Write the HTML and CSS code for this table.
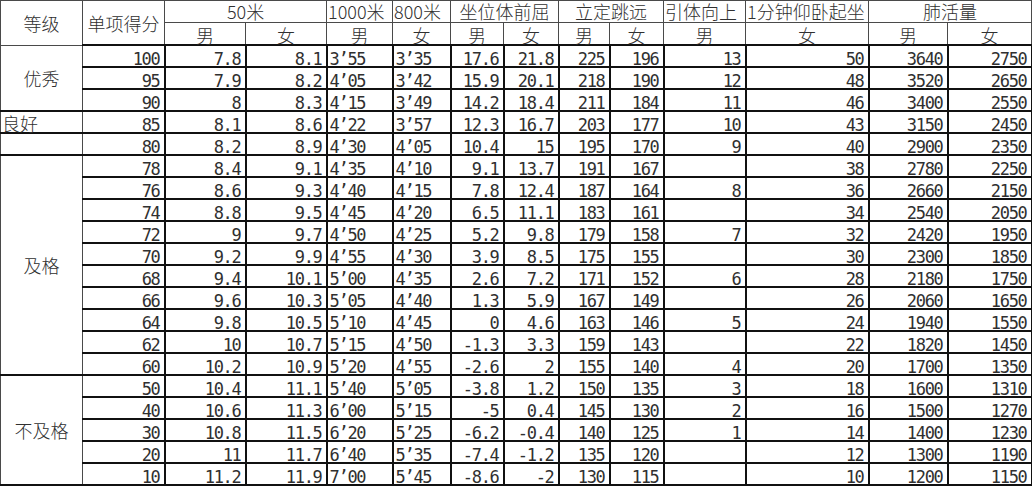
FILE: index.html
```html
<!DOCTYPE html>
<html lang="zh">
<head>
<meta charset="utf-8">
<title>体质测试评分标准</title>
<link rel="stylesheet" href="styles.css">
</head>
<body>
<table class="sheet">
  <colgroup>
    <col class="c82"><col class="c82"><col class="c81"><col class="c81"><col class="c66"><col class="c58"><col class="c53"><col class="c55"><col class="c51"><col class="c54"><col class="c82"><col class="c123"><col class="c79"><col class="c84">
  </colgroup>
  <thead>
    <tr class="h1">
      <th rowspan="2" class="grade-h">等级</th>
      <th rowspan="2" class="score-h">单项得分</th>
      <th colspan="2">50米</th>
      <th class="lefth">1000米</th>
      <th class="lefth">800米</th>
      <th colspan="2">坐位体前屈</th>
      <th colspan="2">立定跳远</th>
      <th class="lefth">引体向上</th>
      <th class="lefth">1分钟仰卧起坐</th>
      <th colspan="2">肺活量</th>
    </tr>
    <tr class="h2">
      <th>男</th><th>女</th><th>男</th><th>女</th><th>男</th><th>女</th><th>男</th><th>女</th><th>男</th><th>女</th><th>男</th><th>女</th>
    </tr>
  </thead>
  <tbody>
    <tr><td rowspan="3" class="grade">优秀</td><td class="score">100</td><td>7.8</td><td>8.1</td><td class="t">3’55</td><td class="t">3’35</td><td>17.6</td><td>21.8</td><td>225</td><td>196</td><td>13</td><td>50</td><td>3640</td><td>2750</td></tr>
    <tr><td class="score">95</td><td>7.9</td><td>8.2</td><td class="t">4’05</td><td class="t">3’42</td><td>15.9</td><td>20.1</td><td>218</td><td>190</td><td>12</td><td>48</td><td>3520</td><td>2650</td></tr>
    <tr><td class="score">90</td><td>8</td><td>8.3</td><td class="t">4’15</td><td class="t">3’49</td><td>14.2</td><td>18.4</td><td>211</td><td>184</td><td>11</td><td>46</td><td>3400</td><td>2550</td></tr>
    <tr><td class="grade g-liang">良好</td><td class="score">85</td><td>8.1</td><td>8.6</td><td class="t">4’22</td><td class="t">3’57</td><td>12.3</td><td>16.7</td><td>203</td><td>177</td><td>10</td><td>43</td><td>3150</td><td>2450</td></tr>
    <tr><td class="grade"></td><td class="score">80</td><td>8.2</td><td>8.9</td><td class="t">4’30</td><td class="t">4’05</td><td>10.4</td><td>15</td><td>195</td><td>170</td><td>9</td><td>40</td><td>2900</td><td>2350</td></tr>
    <tr><td rowspan="10" class="grade">及格</td><td class="score">78</td><td>8.4</td><td>9.1</td><td class="t">4’35</td><td class="t">4’10</td><td>9.1</td><td>13.7</td><td>191</td><td>167</td><td></td><td>38</td><td>2780</td><td>2250</td></tr>
    <tr><td class="score">76</td><td>8.6</td><td>9.3</td><td class="t">4’40</td><td class="t">4’15</td><td>7.8</td><td>12.4</td><td>187</td><td>164</td><td>8</td><td>36</td><td>2660</td><td>2150</td></tr>
    <tr><td class="score">74</td><td>8.8</td><td>9.5</td><td class="t">4’45</td><td class="t">4’20</td><td>6.5</td><td>11.1</td><td>183</td><td>161</td><td></td><td>34</td><td>2540</td><td>2050</td></tr>
    <tr><td class="score">72</td><td>9</td><td>9.7</td><td class="t">4’50</td><td class="t">4’25</td><td>5.2</td><td>9.8</td><td>179</td><td>158</td><td>7</td><td>32</td><td>2420</td><td>1950</td></tr>
    <tr><td class="score">70</td><td>9.2</td><td>9.9</td><td class="t">4’55</td><td class="t">4’30</td><td>3.9</td><td>8.5</td><td>175</td><td>155</td><td></td><td>30</td><td>2300</td><td>1850</td></tr>
    <tr><td class="score">68</td><td>9.4</td><td>10.1</td><td class="t">5’00</td><td class="t">4’35</td><td>2.6</td><td>7.2</td><td>171</td><td>152</td><td>6</td><td>28</td><td>2180</td><td>1750</td></tr>
    <tr><td class="score">66</td><td>9.6</td><td>10.3</td><td class="t">5’05</td><td class="t">4’40</td><td>1.3</td><td>5.9</td><td>167</td><td>149</td><td></td><td>26</td><td>2060</td><td>1650</td></tr>
    <tr><td class="score">64</td><td>9.8</td><td>10.5</td><td class="t">5’10</td><td class="t">4’45</td><td>0</td><td>4.6</td><td>163</td><td>146</td><td>5</td><td>24</td><td>1940</td><td>1550</td></tr>
    <tr><td class="score">62</td><td>10</td><td>10.7</td><td class="t">5’15</td><td class="t">4’50</td><td>-1.3</td><td>3.3</td><td>159</td><td>143</td><td></td><td>22</td><td>1820</td><td>1450</td></tr>
    <tr><td class="score">60</td><td>10.2</td><td>10.9</td><td class="t">5’20</td><td class="t">4’55</td><td>-2.6</td><td>2</td><td>155</td><td>140</td><td>4</td><td>20</td><td>1700</td><td>1350</td></tr>
    <tr><td rowspan="5" class="grade">不及格</td><td class="score">50</td><td>10.4</td><td>11.1</td><td class="t">5’40</td><td class="t">5’05</td><td>-3.8</td><td>1.2</td><td>150</td><td>135</td><td>3</td><td>18</td><td>1600</td><td>1310</td></tr>
    <tr><td class="score">40</td><td>10.6</td><td>11.3</td><td class="t">6’00</td><td class="t">5’15</td><td>-5</td><td>0.4</td><td>145</td><td>130</td><td>2</td><td>16</td><td>1500</td><td>1270</td></tr>
    <tr><td class="score">30</td><td>10.8</td><td>11.5</td><td class="t">6’20</td><td class="t">5’25</td><td>-6.2</td><td>-0.4</td><td>140</td><td>125</td><td>1</td><td>14</td><td>1400</td><td>1230</td></tr>
    <tr><td class="score">20</td><td>11</td><td>11.7</td><td class="t">6’40</td><td class="t">5’35</td><td>-7.4</td><td>-1.2</td><td>135</td><td>120</td><td></td><td>12</td><td>1300</td><td>1190</td></tr>
    <tr><td class="score">10</td><td>11.2</td><td>11.9</td><td class="t">7’00</td><td class="t">5’45</td><td>-8.6</td><td>-2</td><td>130</td><td>115</td><td></td><td>10</td><td>1200</td><td>1150</td></tr>
  </tbody>
</table>
</body>
</html>
```

FILE: styles.css
```css
html, body {
  margin: 0;
  padding: 0;
  background: #ffffff;
}

.sheet {
  border-collapse: collapse;
  table-layout: fixed;
  width: 1031px;
  color: #303030;
}

.c51 { width: 51px; }
.c53 { width: 53px; }
.c54 { width: 54px; }
.c55 { width: 55px; }
.c58 { width: 58px; }
.c66 { width: 66px; }
.c79 { width: 79px; }
.c81 { width: 81px; }
.c82 { width: 82px; }
.c84 { width: 84px; }
.c123 { width: 123px; }

.sheet th {
  font-family: "Noto Sans CJK SC", sans-serif;
  font-weight: 300;
  font-size: 18px;
  line-height: 18px;
  padding: 0;
  text-align: center;
  vertical-align: middle;
  white-space: nowrap;
  border: 1px solid #4a4a4a;
}

.sheet .h1 th {
  height: 19px;
  padding-bottom: 2px;
}

.sheet .h1 th.grade-h,
.sheet .h1 th.score-h {
  height: 21px;
  padding-bottom: 0;
}

.sheet .h2 th {
  height: 18px;
  padding-top: 3px;
}

.sheet .lefth {
  text-align: left;
  padding-left: 1px;
}

.sheet td {
  font-family: "DejaVu Sans Mono", monospace;
  font-size: 17px;
  letter-spacing: -1.3px;
  line-height: 13px;
  height: 20px;
  padding: 0 4px 0 2px;
  text-align: right;
  vertical-align: bottom;
  white-space: nowrap;
  border: 2px solid #111111;
}

.sheet td.t {
  text-align: left;
}

.sheet td.score {
  border-left: 1px solid #4a4a4a;
}

.sheet td.grade {
  font-family: "Noto Sans CJK SC", sans-serif;
  font-weight: 300;
  font-size: 18px;
  letter-spacing: 0;
  line-height: 20px;
  text-align: center;
  vertical-align: middle;
  padding: 0;
  border: 1px solid #4a4a4a;
  border-bottom: 2px solid #111111;
}

.sheet td.g-liang {
  text-align: left;
  vertical-align: bottom;
  padding-left: 1px;
  line-height: 18px;
}
```
